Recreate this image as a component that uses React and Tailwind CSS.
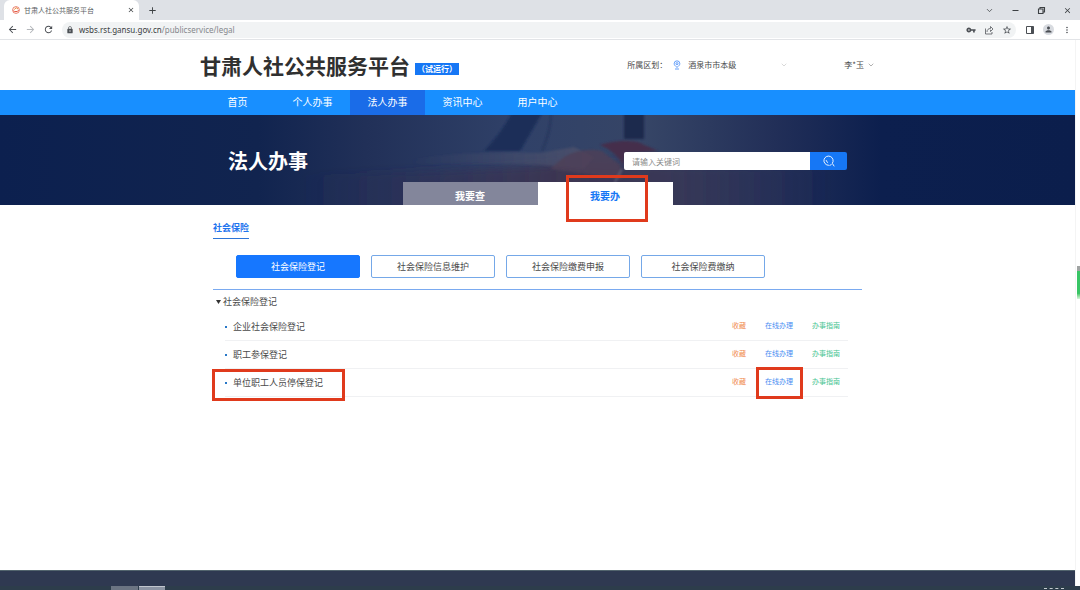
import React from "react";
import {
  MdArrowBack,
  MdArrowForward,
  MdRefresh,
  MdLock,
  MdVpnKey,
  MdStarBorder,
  MdPerson,
  MdMoreVert,
  MdClose,
  MdAdd,
} from "react-icons/md";
import { ChevronDown } from "lucide-react";

const navItems = ["首页", "个人办事", "法人办事", "资讯中心", "用户中心"];
const categories = ["社会保险登记", "社会保险信息维护", "社会保险缴费申报", "社会保险费缴纳"];
const services = ["企业社会保险登记", "职工参保登记", "单位职工人员停保登记"];

function Highlight({ className }) {
  return <span aria-hidden="true" className={`pointer-events-none absolute border-3 border-[#e03a1c] ${className}`} />;
}

function BrowserChrome() {
  return (
    <div>
      <div className="flex h-5 items-center bg-[#dee1e6] pl-1">
        <div className="flex h-full w-[135px] items-center rounded-t-md bg-white pr-1 pl-2">
          <svg viewBox="0 0 16 16" className="size-2 shrink-0">
            <circle cx="8" cy="8" r="6.8" fill="none" stroke="#e5604a" strokeWidth="1.600" />
            <path d="M2.500 9.500c3 2.500 8 2.500 11-1" fill="none" stroke="#e5533d" strokeWidth="2" />
            <path d="M4.500 7l4-3.500L12 6" fill="none" stroke="#e88b3a" strokeWidth="2" />
          </svg>
          <span className="ml-1 flex-1 text-[7px] whitespace-nowrap text-[#5c5f64]">甘肃人社公共服务平台</span>
          <button aria-label="关闭标签页"><MdClose className="size-2 text-[#3c4043]" /></button>
        </div>
        <button aria-label="新标签页" className="ml-2"><MdAdd className="size-[11px] text-[#3c4043]" /></button>
        <div className="ml-auto flex items-center gap-[17px] pr-2 text-[#3c4043]">
          <button aria-label="搜索标签页"><ChevronDown className="size-[9px]" /></button>
          <button aria-label="最小化">
            <svg viewBox="0 0 9 9" className="size-[9px]"><path d="M1.500 4.500h6" stroke="currentColor" /></svg>
          </button>
          <button aria-label="还原">
            <svg viewBox="0 0 9 9" className="size-[9px]" fill="none" stroke="currentColor" strokeWidth="1.100">
              <path d="M1.500 3h4.500v4.500h-4.500zM3 3V1.500h4.500V6H6" />
            </svg>
          </button>
          <button aria-label="关闭"><MdClose className="size-[9px]" /></button>
        </div>
      </div>
      <div className="flex h-5 items-center border-b border-[#e2e4e7] bg-white pr-2 pl-[7px] text-[#4b4f54]">
        <div className="flex gap-[7px]">
          <button aria-label="后退"><MdArrowBack className="size-[11px]" /></button>
          <button aria-label="前进"><MdArrowForward className="size-[11px] text-[#b4b7bb]" /></button>
          <button aria-label="刷新"><MdRefresh className="size-[11px]" /></button>
        </div>
        <div className="ml-2 flex h-4 flex-1 items-center rounded-full bg-[#f1f3f4] pr-1 pl-1">
          <MdLock className="size-2" />
          <span className="ml-[5px] flex-1 font-['Noto_Sans',sans-serif] text-[8px] text-[#85888c]">
            <span className="text-[#3a3d41]">wsbs.rst.gansu.gov.cn</span>/publicservice/legal
          </span>
          <div className="flex gap-2">
            <button aria-label="密码"><MdVpnKey className="size-[10px]" /></button>
            <button aria-label="分享">
              <svg viewBox="0 0 20 20" className="size-[10px]" fill="none" stroke="currentColor" strokeWidth="1.500">
                <path d="M3 7v11h13v-4M6 14c0-5 3-7 7-7V3l5 5-5 5V9.500" />
              </svg>
            </button>
            <button aria-label="收藏此页"><MdStarBorder className="size-[10px]" /></button>
          </div>
        </div>
        <div className="ml-[9px] flex items-center gap-2">
          <button aria-label="侧边栏">
            <svg viewBox="0 0 10 10" className="size-[10px]">
              <path d="M1.500 1.500h7v7h-7z" fill="none" stroke="currentColor" />
              <path d="M6 1.500h2.500v7H6z" fill="currentColor" />
            </svg>
          </button>
          <button aria-label="用户" className="rounded-full bg-[#d8dbe0] p-px"><MdPerson className="size-[9px]" /></button>
          <button aria-label="更多"><MdMoreVert className="size-[10px]" /></button>
        </div>
      </div>
    </div>
  );
}

function HeroBackdrop() {
  return (
    <svg aria-hidden="true" viewBox="0 0 1075 90" preserveAspectRatio="none" className="absolute inset-0 h-full w-full">
      <defs>
        <linearGradient id="sky" x1="0" x2="1" y1="0" y2="0">
          <stop offset="0" stopColor="#0c204f" />
          <stop offset="0.24" stopColor="#11244f" />
          <stop offset="0.34" stopColor="#213058" />
          <stop offset="0.48" stopColor="#304168" />
          <stop offset="0.6" stopColor="#364566" />
          <stop offset="0.72" stopColor="#222f58" />
          <stop offset="0.82" stopColor="#0c1f4e" />
          <stop offset="1" stopColor="#0b1e4c" />
        </linearGradient>
        <linearGradient id="dusk" x1="0" x2="1" y1="0" y2="0">
          <stop offset="0" stopColor="#2b2a52" stopOpacity="0" />
          <stop offset="0.5" stopColor="#3e344f" stopOpacity="0.9" />
          <stop offset="0.7" stopColor="#3a3451" stopOpacity="0.7" />
          <stop offset="1" stopColor="#2c2c52" stopOpacity="0" />
        </linearGradient>
        <linearGradient id="sleeve" x1="0" x2="1" y1="0" y2="0">
          <stop offset="0" stopColor="#4a4f6b" stopOpacity="0" />
          <stop offset="1" stopColor="#50526c" stopOpacity="0.8" />
        </linearGradient>
        <filter id="haze" x="-20%" y="-50%" width="140%" height="200%"><feGaussianBlur stdDeviation="4" /></filter>
        <filter id="soft" x="-20%" y="-20%" width="140%" height="140%"><feGaussianBlur stdDeviation="1.200" /></filter>
      </defs>
      <rect width="1075" height="90" fill="url(#sky)" />
      <path d="M300 60C400 58 480 54 570 48L830 54V98H300z" fill="url(#dusk)" filter="url(#haze)" />
      <g filter="url(#soft)">
        <path d="M512-2h30l-22 38h-36q16-16 28-38z" fill="#1a2d58" />
        <path d="M551-2q0 18-9 38" fill="none" stroke="#22325a" strokeWidth="1.500" />
        <path d="M624-2h20v26h-20z" fill="#1b2b4e" />
        <path d="M410 44q60-8 130-6l34-6 20 10-10 12q-60-8-174-4z" fill="url(#sleeve)" />
        <path d="M564 42q18-10 38-6l18 14 2 14-42-6-30-4z" fill="#4d3f58" opacity=".85" />
        <path d="M600 30q18-6 38-3l20 9-32 2-3 12q-8-14-23-20z" fill="#452f4b" />
        <path d="M622 54q-6 10-10 20" fill="none" stroke="#6a6a80" strokeWidth="2" opacity=".6" />
      </g>
    </svg>
  );
}

export default function App() {
  return (
    <div className="flex min-h-screen flex-col bg-white font-['Noto_Sans_CJK_SC',sans-serif] leading-none text-[#4a4a4a] [&_svg]:block">
      <BrowserChrome />
      <div className="flex flex-1">
        <div className="flex flex-1 flex-col">
          <header className="mx-auto flex h-[50px] w-full max-w-[675px] items-center">
            <h1 className="text-[21px] font-bold whitespace-nowrap text-[#303030]">甘肃人社公共服务平台</h1>
            <span className="mt-2 ml-[5px] flex h-3 items-center bg-[#1677f5] px-[2px] text-[8px] font-bold whitespace-nowrap text-white">（试运行）</span>
            <div className="ml-auto flex items-center text-[8px] whitespace-nowrap">
              <span>所属区划：</span>
              <svg viewBox="0 0 10 12" className="ml-[6px] h-[10px] w-2" fill="none" stroke="#3e87f7">
                <path d="M5 9C2.500 7 1.500 6 1.500 4.300a3.500 3.500 0 0 1 7 0C8.500 6 7.500 7 5 9z" />
                <circle cx="5" cy="4.300" r="1.300" />
                <path d="M2.500 11h5" />
              </svg>
              <button className="ml-[7px] flex w-[100px] items-center justify-between">
                酒泉市市本级<ChevronDown className="size-2 text-[#c5c5c5]" />
              </button>
              <button className="ml-14 flex items-center gap-[3px]">
                李*玉<ChevronDown className="size-2 text-[#888]" />
              </button>
            </div>
          </header>

          <nav className="bg-[#188fff]">
            <div className="mx-auto flex max-w-[675px]">
              {navItems.map((item, i) => (
                <a key={item} href="#" className={`flex h-[25px] w-[75px] items-center justify-center pb-px text-[10px] text-white ${i === 2 ? "bg-[#1a6ce8]" : ""}`}>
                  {item}
                </a>
              ))}
            </div>
          </nav>

          <section className="relative bg-[#0c204f]">
            <HeroBackdrop />
            <div className="relative mx-auto flex h-[90px] max-w-[675px] flex-col justify-between">
              <div className="flex items-center justify-between pt-9 pr-7 pl-7">
                <h2 className="text-[20px] leading-5 font-bold text-white">法人办事</h2>
                <form className="flex h-[18px]" onSubmit={(e) => e.preventDefault()}>
                  <input aria-label="关键词" placeholder="请输入关键词" className="w-[186px] rounded-l-xs bg-white px-2 text-[8px] outline-none placeholder:text-[#8a8a8a]" />
                  <button aria-label="搜索" className="flex w-[37px] items-center justify-center rounded-r-xs bg-[#1677f5] text-white">
                    <svg viewBox="0 0 12 12" className="size-3" fill="none" stroke="currentColor" strokeWidth="0.900" strokeLinecap="round">
                      <path d="M5.500 10.300A4.600 4.600 0 1 1 9.300 8.300L11 11M6.800 10.300l1.400-.6" />
                      <path d="M3.200 5.500a2.500 2.500 0 0 0 1.500 2" />
                    </svg>
                  </button>
                </form>
              </div>
              <div className="flex h-[23px] justify-center text-[10px] font-bold">
                <button className="w-[135px] bg-[#83869b] pt-1 text-white">我要查</button>
                <button className="relative w-[135px] bg-white pt-1 text-[#1677f5]">
                  我要办
                  <Highlight className="-top-[7px] left-7 h-[47px] w-[82px]" />
                </button>
              </div>
            </div>
          </section>

          <main className="mx-auto w-full max-w-[649px] flex-1 pt-[17px] text-[9px]">
            <h3 className="inline-block h-[17px] border-b border-[#2d75d8] pt-px text-[9px] font-bold text-[#1f75ee]">社会保险</h3>
            <div className="flex gap-[11px] border-b border-[#7aaaf0] pt-4 pb-[11px] pl-[23px]">
              {categories.map((item, i) => (
                <button key={item} className={`h-[23px] w-[124px] rounded-xs border ${i === 0 ? "border-[#1677ff] bg-[#1677ff] text-white" : "border-[#75a8e8] bg-white"}`}>
                  {item}
                </button>
              ))}
            </div>
            <details open>
              <summary className="flex h-[23px] list-none items-center gap-[2px] pl-[3px]">
                <svg viewBox="0 0 5 4" className="h-1 w-[5px]"><path d="M0 0h5L2.500 4z" fill="#333" /></svg>
                社会保险登记
              </summary>
              <ul className="pr-[14px] pl-3">
                {services.map((item, i) => (
                  <li key={item} className="relative flex h-7 items-center border-b border-[#f0f1f3] pr-2">
                    <span className="mr-[6px] size-[2px] bg-[#2878c8]" />
                    {item}
                    <div className="ml-auto flex gap-[19px] pb-[2px] text-[7px]">
                      <a href="#" className="text-[#f08c50]">收藏</a>
                      <a href="#" className="relative text-[#4a8ef2]">
                        在线办理
                        {i === 2 && <Highlight className="-top-[11px] -left-[9px] h-8 w-[47px]" />}
                      </a>
                      <a href="#" className="text-[#45c491]">办事指南</a>
                    </div>
                    {i === 2 && <Highlight className="top-0 -left-[13px] h-8 w-[133px]" />}
                  </li>
                ))}
              </ul>
            </details>
          </main>
          <footer className="h-4 border-t border-[#52646d] bg-[#2f3951]" />
        </div>
        <div aria-hidden="true" className="flex w-[5px] flex-col border-l border-[#f4f4f4] pt-[226px] pl-px">
          <div className="h-[5px] bg-[#a0a4a3]" />
          <div className="h-7 bg-linear-to-b from-[#38c565] from-80% to-[#d5f5da]" />
        </div>
      </div>
      <div className="flex h-1 gap-px bg-[#2d3d4b] pl-[111px]">
        <div className="w-[27px] bg-[#6b7482]" />
        <div className="w-[26px] border-t border-[#c1c6ce] bg-[#8c94a3]" />
        <div className="mr-4 ml-auto h-1 w-5 overflow-hidden pt-[2px]">
          <div className="border-t border-dashed border-[#c5cbd0]" />
        </div>
      </div>
    </div>
  );
}
